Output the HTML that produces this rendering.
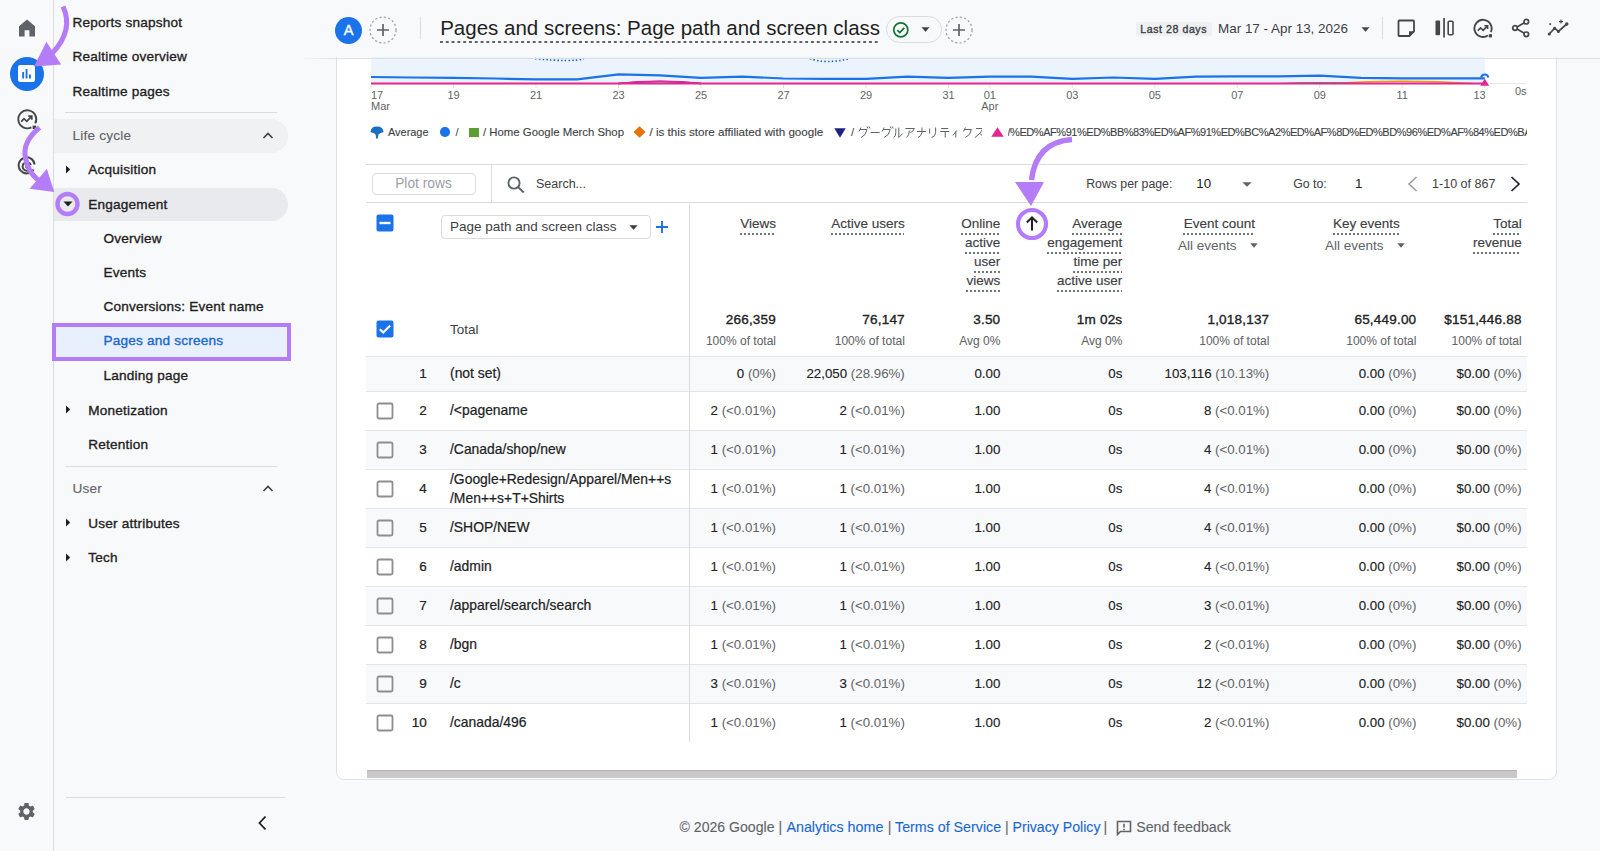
<!DOCTYPE html>
<html><head><meta charset="utf-8"><style>
html,body{margin:0;padding:0;}
body{width:1600px;height:851px;overflow:hidden;position:relative;background:#f8f9fa;font-family:"Liberation Sans",sans-serif;}
.a{position:absolute;}
.t{position:absolute;white-space:nowrap;}
</style></head><body>
<div class="a" style="left:53px;top:0px;width:1px;height:851px;background:#dadce0;"></div>
<svg class="a" style="left:17px;top:18px" width="20" height="20" viewBox="0 0 20 20"><path d="M10 1.5 L2 8.2 V18.5 H7.6 V12.3 H12.4 V18.5 H18 V8.2 Z" fill="#5f6368"/></svg>
<div class="a" style="left:9.5px;top:56.5px;width:34px;height:34px;background:#1a73e8;border-radius:50%;"></div>
<svg class="a" style="left:17px;top:64px" width="19" height="19" viewBox="0 0 19 19"><rect x="1" y="1" width="17" height="17" rx="2.2" fill="#fff"/><rect x="5.2" y="8" width="1.9" height="6.5" fill="#1a73e8"/><rect x="8.6" y="5" width="1.9" height="9.5" fill="#1a73e8"/><rect x="12" y="10.5" width="1.9" height="4" fill="#1a73e8"/></svg>
<svg class="a" style="left:15px;top:108px" width="24" height="24" viewBox="0 0 24 24"><path d="M20.3 15.4 A9 9 0 1 0 16.4 19.3" fill="none" stroke="#444746" stroke-width="1.9"/><path d="M6.2 13.6 L9 10.7 L11.8 13.3 L16.3 8.7" fill="none" stroke="#444746" stroke-width="1.8"/><path d="M13.2 8.2 H16.8 V11.8" fill="none" stroke="#444746" stroke-width="1.7"/><rect x="17.6" y="17.6" width="3.4" height="3.4" fill="#444746"/></svg>
<svg class="a" style="left:16px;top:156px" width="22" height="22" viewBox="0 0 22 22"><path d="M17.5 13.5 A8 8 0 1 1 18.6 8.5" fill="none" stroke="#444746" stroke-width="2"/><path d="M14.3 12.8 A4.2 4.2 0 1 1 14.8 9.2" fill="none" stroke="#444746" stroke-width="2"/><circle cx="10.5" cy="11" r="1.4" fill="#444746"/><path d="M11 11.5 L19 19.5" stroke="#444746" stroke-width="2.2"/></svg>
<svg class="a" style="left:16px;top:801px" width="21" height="21" viewBox="0 0 24 24"><path fill="#5f6368" d="M19.14 12.94c.04-.3.06-.61.06-.94 0-.32-.02-.64-.07-.94l2.03-1.58c.18-.14.23-.41.12-.61l-1.92-3.32c-.12-.22-.37-.29-.59-.22l-2.39.96c-.5-.38-1.03-.7-1.62-.94l-.36-2.54c-.04-.24-.24-.41-.48-.41h-3.84c-.24 0-.43.17-.47.41l-.36 2.54c-.59.24-1.13.57-1.62.94l-2.39-.96c-.22-.08-.47 0-.59.22L2.74 8.87c-.12.21-.08.47.12.61l2.03 1.58c-.05.3-.09.63-.09.94s.02.64.07.94l-2.03 1.58c-.18.14-.23.41-.12.61l1.92 3.32c.12.22.37.29.59.22l2.39-.96c.5.38 1.03.7 1.62.94l.36 2.54c.05.24.24.41.48.41h3.84c.24 0 .44-.17.47-.41l.36-2.54c.59-.24 1.13-.56 1.62-.94l2.39.96c.22.08.47 0 .59-.22l1.92-3.32c.12-.22.07-.47-.12-.61l-2.01-1.58zM12 15.6c-1.98 0-3.6-1.62-3.6-3.6s1.62-3.6 3.6-3.6 3.6 1.62 3.6 3.6-1.62 3.6-3.6 3.6z"/></svg>
<div class="t" style="top:15.89px;font-size:13.6px;line-height:13.6px;color:#1f1f1f;-webkit-text-stroke:0.35px #1f1f1f;letter-spacing:0.2px;left:72.5px;">Reports snapshot</div>
<div class="t" style="top:50.09px;font-size:13.6px;line-height:13.6px;color:#1f1f1f;-webkit-text-stroke:0.35px #1f1f1f;letter-spacing:0.2px;left:72.5px;">Realtime overview</div>
<div class="t" style="top:84.59px;font-size:13.6px;line-height:13.6px;color:#1f1f1f;-webkit-text-stroke:0.35px #1f1f1f;letter-spacing:0.2px;left:72.5px;">Realtime pages</div>
<div class="a" style="left:65px;top:112px;width:212px;height:1px;background:#dadce0;"></div>
<div class="a" style="left:54px;top:118.5px;width:234px;height:34px;background:#eff1f2;border-radius:0 17px 17px 0;"></div>
<div class="t" style="top:128.99px;font-size:13.6px;line-height:13.6px;color:#5f6368;-webkit-text-stroke:0.1px #5f6368;letter-spacing:0.2px;left:72.5px;">Life cycle</div>
<svg class="a" style="left:262px;top:131px" width="12" height="9" viewBox="0 0 12 9"><path d="M1.5 7 L6 2.5 L10.5 7" fill="none" stroke="#3c4043" stroke-width="1.6"/></svg>
<svg class="a" style="left:65px;top:165px" width="6" height="9" viewBox="0 0 6 9"><path d="M1 0.5 L5.2 4.5 L1 8.5 Z" fill="#1f1f1f"/></svg>
<div class="t" style="top:163.29px;font-size:13.6px;line-height:13.6px;color:#1f1f1f;-webkit-text-stroke:0.35px #1f1f1f;letter-spacing:0.2px;left:88.3px;">Acquisition</div>
<div class="a" style="left:54px;top:187.5px;width:234px;height:33.5px;background:#e8eaed;border-radius:0 17px 17px 0;"></div>
<svg class="a" style="left:62.5px;top:201px" width="10" height="6" viewBox="0 0 10 6"><path d="M0.5 0.5 L9.5 0.5 L5 5.5 Z" fill="#1f1f1f"/></svg>
<div class="t" style="top:197.69px;font-size:13.6px;line-height:13.6px;color:#1f1f1f;-webkit-text-stroke:0.35px #1f1f1f;letter-spacing:0.2px;left:88.3px;">Engagement</div>
<div class="t" style="top:231.89px;font-size:13.6px;line-height:13.6px;color:#1f1f1f;-webkit-text-stroke:0.35px #1f1f1f;letter-spacing:0.2px;left:103.5px;">Overview</div>
<div class="t" style="top:266.09px;font-size:13.6px;line-height:13.6px;color:#1f1f1f;-webkit-text-stroke:0.35px #1f1f1f;letter-spacing:0.2px;left:103.5px;">Events</div>
<div class="t" style="top:300.19px;font-size:13.6px;line-height:13.6px;color:#1f1f1f;-webkit-text-stroke:0.35px #1f1f1f;letter-spacing:0.2px;left:103.5px;">Conversions: Event name</div>
<div class="a" style="left:54px;top:325px;width:234px;height:33px;background:#e8f0fe;"></div>
<div class="a" style="left:51.5px;top:323px;width:239px;height:37.5px;box-sizing:border-box;border:4.5px solid #b57cf8;"></div>
<div class="t" style="top:334.29px;font-size:13.6px;line-height:13.6px;color:#1967d2;-webkit-text-stroke:0.35px #1967d2;letter-spacing:0.2px;left:103.5px;">Pages and screens</div>
<div class="t" style="top:369.19px;font-size:13.6px;line-height:13.6px;color:#1f1f1f;-webkit-text-stroke:0.35px #1f1f1f;letter-spacing:0.2px;left:103.5px;">Landing page</div>
<svg class="a" style="left:65px;top:405px" width="6" height="9" viewBox="0 0 6 9"><path d="M1 0.5 L5.2 4.5 L1 8.5 Z" fill="#1f1f1f"/></svg>
<div class="t" style="top:403.59px;font-size:13.6px;line-height:13.6px;color:#1f1f1f;-webkit-text-stroke:0.35px #1f1f1f;letter-spacing:0.2px;left:88.3px;">Monetization</div>
<div class="t" style="top:437.89px;font-size:13.6px;line-height:13.6px;color:#1f1f1f;-webkit-text-stroke:0.35px #1f1f1f;letter-spacing:0.2px;left:88.3px;">Retention</div>
<div class="a" style="left:65px;top:466px;width:212px;height:1px;background:#dadce0;"></div>
<div class="t" style="top:482.29px;font-size:13.6px;line-height:13.6px;color:#5f6368;-webkit-text-stroke:0.1px #5f6368;letter-spacing:0.2px;left:72.5px;">User</div>
<svg class="a" style="left:262px;top:484px" width="12" height="9" viewBox="0 0 12 9"><path d="M1.5 7 L6 2.5 L10.5 7" fill="none" stroke="#3c4043" stroke-width="1.6"/></svg>
<svg class="a" style="left:65px;top:518px" width="6" height="9" viewBox="0 0 6 9"><path d="M1 0.5 L5.2 4.5 L1 8.5 Z" fill="#1f1f1f"/></svg>
<div class="t" style="top:516.69px;font-size:13.6px;line-height:13.6px;color:#1f1f1f;-webkit-text-stroke:0.35px #1f1f1f;letter-spacing:0.2px;left:88.3px;">User attributes</div>
<svg class="a" style="left:65px;top:552.5px" width="6" height="9" viewBox="0 0 6 9"><path d="M1 0.5 L5.2 4.5 L1 8.5 Z" fill="#1f1f1f"/></svg>
<div class="t" style="top:550.79px;font-size:13.6px;line-height:13.6px;color:#1f1f1f;-webkit-text-stroke:0.35px #1f1f1f;letter-spacing:0.2px;left:88.3px;">Tech</div>
<div class="a" style="left:66px;top:796.5px;width:219px;height:1px;background:#dadce0;"></div>
<svg class="a" style="left:256px;top:815px" width="12" height="16" viewBox="0 0 12 16"><path d="M9.5 1.5 L3.5 8 L9.5 14.5" fill="none" stroke="#1f1f1f" stroke-width="1.8"/></svg>
<div class="a" style="left:335.5px;top:40px;width:1221px;height:740px;background:#fff;box-sizing:border-box;border:1px solid #e0e2e5;border-radius:8px;"></div>
<svg class="a" style="left:0;top:0" width="1600" height="120" viewBox="0 0 1600 120"><rect x="371.0" y="40" width="1113.8" height="43.5" fill="#ebf3fc"/><line x1="371.0" y1="83.6" x2="1526" y2="83.6" stroke="#e6e6e6" stroke-width="1"/><line x1="371.0" y1="84" x2="371.0" y2="88" stroke="#e0e0e0" stroke-width="1"/><line x1="453.5" y1="84" x2="453.5" y2="88" stroke="#e0e0e0" stroke-width="1"/><line x1="536.0" y1="84" x2="536.0" y2="88" stroke="#e0e0e0" stroke-width="1"/><line x1="618.5" y1="84" x2="618.5" y2="88" stroke="#e0e0e0" stroke-width="1"/><line x1="701.0" y1="84" x2="701.0" y2="88" stroke="#e0e0e0" stroke-width="1"/><line x1="783.5" y1="84" x2="783.5" y2="88" stroke="#e0e0e0" stroke-width="1"/><line x1="866.0" y1="84" x2="866.0" y2="88" stroke="#e0e0e0" stroke-width="1"/><line x1="948.5" y1="84" x2="948.5" y2="88" stroke="#e0e0e0" stroke-width="1"/><line x1="989.8" y1="84" x2="989.8" y2="88" stroke="#e0e0e0" stroke-width="1"/><line x1="1072.2" y1="84" x2="1072.2" y2="88" stroke="#e0e0e0" stroke-width="1"/><line x1="1154.8" y1="84" x2="1154.8" y2="88" stroke="#e0e0e0" stroke-width="1"/><line x1="1237.2" y1="84" x2="1237.2" y2="88" stroke="#e0e0e0" stroke-width="1"/><line x1="1319.8" y1="84" x2="1319.8" y2="88" stroke="#e0e0e0" stroke-width="1"/><line x1="1402.2" y1="84" x2="1402.2" y2="88" stroke="#e0e0e0" stroke-width="1"/><line x1="1484.8" y1="84" x2="1484.8" y2="88" stroke="#e0e0e0" stroke-width="1"/><path d="M535 58.6 Q572 62.5 584 58.6" fill="none" stroke="#1565c0" stroke-width="1.6" stroke-dasharray="1.5 2.2"/><path d="M810 58.5 Q826 64.5 850 58.5" fill="none" stroke="#1565c0" stroke-width="1.6" stroke-dasharray="1.5 2.2"/><path d="M1332.1 83.5 Q1402.2 79 1472.4 83.5" fill="none" stroke="#f29900" stroke-width="1.6"/><path d="M1278.5 83.5 Q1319.8 81.8 1361.0 83.5" fill="none" stroke="#34a853" stroke-width="1.2"/><path d="M618.5 83.5 Q659.8 79.5 701.0 83.5" fill="none" stroke="#1a237e" stroke-width="1.5"/><path d="M618.5 83.5 Q659.8 79 701.0 83.5" fill="none" stroke="#e52592" stroke-width="1.6"/><path d="M371.0 77.0 L412.2 77.5 L453.5 77.9 L494.8 78.5 L536.0 79.4 L577.2 79.4 L618.5 74.3 L659.8 75.3 L701.0 77.9 L742.2 76.6 L783.5 78.5 L824.8 78.8 L866.0 78.8 L907.2 76.6 L948.5 77.9 L989.8 76.6 L1031.0 76.6 L1072.2 78.8 L1113.5 77.5 L1154.8 78.8 L1196.0 76.6 L1237.2 76.3 L1278.5 76.3 L1319.8 75.6 L1361.0 77.8 L1402.2 78.4 L1443.5 78.4 L1484.8 78.4" fill="none" stroke="#1a73e8" stroke-width="2.2" stroke-linejoin="round"/><line x1="371.0" y1="83.4" x2="1484.8" y2="83.4" stroke="#e52592" stroke-width="2"/><path d="M1481.2 77.5 A3.6 3.6 0 0 1 1488.3 77.5" fill="none" stroke="#1a73e8" stroke-width="2.2"/><path d="M1480.2 85.8 L1484.8 78.8 L1489.2 85.8 Z" fill="#e52592"/></svg>
<div class="t" style="top:90.09px;font-size:11px;line-height:11px;color:#5f6368;left:371.0px;">17</div>
<div class="t" style="top:90.09px;font-size:11px;line-height:11px;color:#5f6368;left:453.5px;transform:translateX(-50%);">19</div>
<div class="t" style="top:90.09px;font-size:11px;line-height:11px;color:#5f6368;left:536.0px;transform:translateX(-50%);">21</div>
<div class="t" style="top:90.09px;font-size:11px;line-height:11px;color:#5f6368;left:618.5px;transform:translateX(-50%);">23</div>
<div class="t" style="top:90.09px;font-size:11px;line-height:11px;color:#5f6368;left:701.0px;transform:translateX(-50%);">25</div>
<div class="t" style="top:90.09px;font-size:11px;line-height:11px;color:#5f6368;left:783.5px;transform:translateX(-50%);">27</div>
<div class="t" style="top:90.09px;font-size:11px;line-height:11px;color:#5f6368;left:866.0px;transform:translateX(-50%);">29</div>
<div class="t" style="top:90.09px;font-size:11px;line-height:11px;color:#5f6368;left:948.5px;transform:translateX(-50%);">31</div>
<div class="t" style="top:90.09px;font-size:11px;line-height:11px;color:#5f6368;left:989.75px;transform:translateX(-50%);">01</div>
<div class="t" style="top:90.09px;font-size:11px;line-height:11px;color:#5f6368;left:1072.25px;transform:translateX(-50%);">03</div>
<div class="t" style="top:90.09px;font-size:11px;line-height:11px;color:#5f6368;left:1154.75px;transform:translateX(-50%);">05</div>
<div class="t" style="top:90.09px;font-size:11px;line-height:11px;color:#5f6368;left:1237.25px;transform:translateX(-50%);">07</div>
<div class="t" style="top:90.09px;font-size:11px;line-height:11px;color:#5f6368;left:1319.75px;transform:translateX(-50%);">09</div>
<div class="t" style="top:90.09px;font-size:11px;line-height:11px;color:#5f6368;left:1402.25px;transform:translateX(-50%);">11</div>
<div class="t" style="top:90.09px;font-size:11px;line-height:11px;color:#5f6368;right:114.25px;">13</div>
<div class="t" style="top:101.29px;font-size:11px;line-height:11px;color:#5f6368;left:371.0px;">Mar</div>
<div class="t" style="top:101.29px;font-size:11px;line-height:11px;color:#5f6368;left:989.75px;transform:translateX(-50%);">Apr</div>
<div class="t" style="top:85.99px;font-size:11px;line-height:11px;color:#5f6368;left:1515px;">0s</div>
<svg class="a" style="left:370px;top:126px" width="14" height="13" viewBox="0 0 14 13"><path d="M0.5 6.2 Q0.5 0.5 7 0.5 Q13.5 0.5 13.5 6.2 Q9.8 6.4 8.4 8.6 L7.9 12.4 L6.1 12.4 L5.6 8.6 Q4.2 6.4 0.5 6.2 Z" fill="#1a6fc4"/></svg>
<div class="t" style="top:126.93px;font-size:10.95px;line-height:10.95px;color:#3c4043;-webkit-text-stroke:0.1px #3c4043;left:388px;">Average</div>
<div class="a" style="left:440.3px;top:127.3px;width:9.4px;height:9.4px;background:#1a73e8;border-radius:50%;"></div>
<div class="t" style="top:126.63px;font-size:11.3px;line-height:11.3px;color:#3c4043;left:455.5px;">/</div>
<div class="a" style="left:469px;top:127.5px;width:9.8px;height:9.8px;background:#5c9e31;"></div>
<div class="t" style="top:126.57px;font-size:11.38px;line-height:11.38px;color:#3c4043;-webkit-text-stroke:0.1px #3c4043;left:483px;">/ Home Google Merch Shop</div>
<svg class="a" style="left:632.5px;top:126px" width="13" height="12" viewBox="0 0 13 12"><path d="M6.5 0.3 L12.5 6 L6.5 11.7 L0.5 6 Z" fill="#e8710a"/></svg>
<div class="t" style="top:126.34px;font-size:11.65px;line-height:11.65px;color:#3c4043;-webkit-text-stroke:0.1px #3c4043;left:649.5px;">/ is this store affiliated with google</div>
<svg class="a" style="left:834px;top:127.5px" width="12" height="10" viewBox="0 0 12 10"><path d="M0.3 0.3 L11.7 0.3 L6 9.7 Z" fill="#1a237e"/></svg>
<div class="t" style="top:126.63px;font-size:11.3px;line-height:11.3px;color:#3c4043;left:851px;">/</div>
<svg class="a" style="left:858px;top:126px" width="124" height="12" viewBox="0 0 124 12"><path transform="translate(0,0.5)" d="M3 1 L1 5 M2 3 H9 Q8 9 3 11 M9 0 L10 2 M11 0 L12 2" fill="none" stroke="#5f6368" stroke-width="1"/><path transform="translate(11.6,0.5)" d="M1 6 H10" fill="none" stroke="#5f6368" stroke-width="1"/><path transform="translate(23.2,0.5)" d="M3 1 L1 5 M2 3 H9 Q8 9 3 11 M9 0 L10 2 M11 0 L12 2" fill="none" stroke="#5f6368" stroke-width="1"/><path transform="translate(34.8,0.5)" d="M3 2 V6 Q3 10 1 11 M6 1 V11 L10 7" fill="none" stroke="#5f6368" stroke-width="1"/><path transform="translate(46.4,0.5)" d="M1 2 H10 Q9 5 6 6 M5 4 Q5 9 2 11" fill="none" stroke="#5f6368" stroke-width="1"/><path transform="translate(58.0,0.5)" d="M1 5 H10 M6 1 V6 Q5 10 2 11" fill="none" stroke="#5f6368" stroke-width="1"/><path transform="translate(69.6,0.5)" d="M2 2 V7 M8 1 V6 Q8 10 4 11" fill="none" stroke="#5f6368" stroke-width="1"/><path transform="translate(81.19999999999999,0.5)" d="M2 2 H9 M1 5 H10 M6 5 V11" fill="none" stroke="#5f6368" stroke-width="1"/><path transform="translate(92.79999999999998,0.5)" d="M6 4 L2 9 M5 5 V11" fill="none" stroke="#5f6368" stroke-width="1"/><path transform="translate(104.39999999999998,0.5)" d="M3 1 L1 5 M2 3 H9 Q8 9 3 11" fill="none" stroke="#5f6368" stroke-width="1"/><path transform="translate(115.99999999999997,0.5)" d="M2 2 H9 Q7 7 1 11 M6 7 L10 11" fill="none" stroke="#5f6368" stroke-width="1"/></svg>
<svg class="a" style="left:990.5px;top:127px" width="13" height="10" viewBox="0 0 13 10"><path d="M0.3 9.7 L12.7 9.7 L6.5 0.3 Z" fill="#e52592"/></svg>
<div class="t" style="left:1007.5px;top:126.63px;width:519px;overflow:hidden;font-size:11px;line-height:11.3px;letter-spacing:-0.45px;color:#3c4043;-webkit-text-stroke:0.1px #3c4043;">/%ED%AF%91%ED%BB%83%ED%AF%91%ED%BC%A2%ED%AF%8D%ED%BD%96%ED%AF%84%ED%BA%91%ED</div>
<div class="a" style="left:366px;top:164px;width:1161px;height:1px;background:#dadce0;"></div>
<div class="a" style="left:366px;top:202px;width:1161px;height:1px;background:#dadce0;"></div>
<div class="a" style="left:371.5px;top:173px;width:104px;height:22px;box-sizing:border-box;border:1px solid #dadce0;border-radius:4px;"></div>
<div class="t" style="top:177.02px;font-size:13.8px;line-height:13.8px;color:#9aa0a6;left:423.5px;transform:translateX(-50%);">Plot rows</div>
<div class="a" style="left:491px;top:164px;width:1px;height:38px;background:#dadce0;"></div>
<svg class="a" style="left:507px;top:176px" width="19" height="17" viewBox="0 0 19 17"><circle cx="7" cy="7" r="5.6" fill="none" stroke="#5f6368" stroke-width="1.9"/><path d="M11 11 L16.8 16.5" stroke="#5f6368" stroke-width="2"/></svg>
<div class="t" style="top:178.12px;font-size:12.5px;line-height:12.5px;color:#3c4043;left:536px;">Search...</div>
<div class="t" style="top:178.09px;font-size:12.3px;line-height:12.3px;color:#3c4043;left:1086.2px;">Rows per page:</div>
<div class="t" style="top:177.24px;font-size:13.3px;line-height:13.3px;color:#202124;left:1196.3px;">10</div>
<svg class="a" style="left:1241.5px;top:181.5px" width="10" height="5" viewBox="0 0 10 5"><path d="M0.3 0.3 L9.7 0.3 L5 4.8 Z" fill="#5f6368"/></svg>
<div class="t" style="top:178.09px;font-size:12.3px;line-height:12.3px;color:#3c4043;left:1293.3px;">Go to:</div>
<div class="t" style="top:177.24px;font-size:13.3px;line-height:13.3px;color:#202124;left:1355px;">1</div>
<svg class="a" style="left:1407px;top:176px" width="11" height="16" viewBox="0 0 11 16"><path d="M9.5 1 L2 8 L9.5 15" fill="none" stroke="#9aa0a6" stroke-width="1.6"/></svg>
<div class="t" style="top:177.88px;font-size:12.55px;line-height:12.55px;color:#3c4043;left:1432px;">1-10 of 867</div>
<svg class="a" style="left:1510px;top:176px" width="11" height="16" viewBox="0 0 11 16"><path d="M1.5 1 L9 8 L1.5 15" fill="none" stroke="#202124" stroke-width="1.7"/></svg>
<div class="a" style="left:689px;top:203px;width:1px;height:539px;background:#dadce0;"></div>
<svg class="a" style="left:376.2px;top:213.6px" width="18" height="18" viewBox="0 0 18 18"><rect x="0.5" y="0.5" width="17" height="17" rx="2" fill="#1a73e8"/><rect x="3.5" y="7.8" width="11" height="2.4" fill="#fff"/></svg>
<div class="a" style="left:441.3px;top:215px;width:209.5px;height:23.5px;box-sizing:border-box;border:1px solid #dadce0;border-radius:4px;"></div>
<div class="t" style="top:219.77px;font-size:13.5px;line-height:13.5px;color:#3c4043;left:450px;">Page path and screen class</div>
<svg class="a" style="left:629px;top:225px" width="9" height="5" viewBox="0 0 9 5"><path d="M0.3 0.3 L8.7 0.3 L4.5 4.7 Z" fill="#3c4043"/></svg>
<svg class="a" style="left:655px;top:219.5px" width="14" height="14" viewBox="0 0 14 14"><path d="M7 1 V13 M1 7 H13" stroke="#1a73e8" stroke-width="1.9"/></svg>
<div class="t" style="top:217.17px;font-size:13.5px;line-height:13.5px;color:#3c4043;-webkit-text-stroke:0.15px #3c4043;right:824px;text-decoration-line:underline;text-decoration-style:dotted;text-decoration-color:#70757a;text-decoration-thickness:1.5px;text-underline-offset:5px;">Views</div>
<div class="t" style="top:217.17px;font-size:13.5px;line-height:13.5px;color:#3c4043;-webkit-text-stroke:0.15px #3c4043;right:695.2px;text-decoration-line:underline;text-decoration-style:dotted;text-decoration-color:#70757a;text-decoration-thickness:1.5px;text-underline-offset:5px;">Active users</div>
<div class="t" style="top:217.17px;font-size:13.5px;line-height:13.5px;color:#3c4043;-webkit-text-stroke:0.15px #3c4043;right:599.7px;text-decoration-line:underline;text-decoration-style:dotted;text-decoration-color:#70757a;text-decoration-thickness:1.5px;text-underline-offset:5px;">Online</div>
<div class="t" style="top:236.17px;font-size:13.5px;line-height:13.5px;color:#3c4043;-webkit-text-stroke:0.15px #3c4043;right:599.7px;text-decoration-line:underline;text-decoration-style:dotted;text-decoration-color:#70757a;text-decoration-thickness:1.5px;text-underline-offset:5px;">active</div>
<div class="t" style="top:255.17px;font-size:13.5px;line-height:13.5px;color:#3c4043;-webkit-text-stroke:0.15px #3c4043;right:599.7px;text-decoration-line:underline;text-decoration-style:dotted;text-decoration-color:#70757a;text-decoration-thickness:1.5px;text-underline-offset:5px;">user</div>
<div class="t" style="top:274.17px;font-size:13.5px;line-height:13.5px;color:#3c4043;-webkit-text-stroke:0.15px #3c4043;right:599.7px;text-decoration-line:underline;text-decoration-style:dotted;text-decoration-color:#70757a;text-decoration-thickness:1.5px;text-underline-offset:5px;">views</div>
<div class="t" style="top:217.17px;font-size:13.5px;line-height:13.5px;color:#3c4043;-webkit-text-stroke:0.15px #3c4043;right:477.70000000000005px;text-decoration-line:underline;text-decoration-style:dotted;text-decoration-color:#70757a;text-decoration-thickness:1.5px;text-underline-offset:5px;">Average</div>
<div class="t" style="top:236.17px;font-size:13.5px;line-height:13.5px;color:#3c4043;-webkit-text-stroke:0.15px #3c4043;right:477.70000000000005px;text-decoration-line:underline;text-decoration-style:dotted;text-decoration-color:#70757a;text-decoration-thickness:1.5px;text-underline-offset:5px;">engagement</div>
<div class="t" style="top:255.17px;font-size:13.5px;line-height:13.5px;color:#3c4043;-webkit-text-stroke:0.15px #3c4043;right:477.70000000000005px;text-decoration-line:underline;text-decoration-style:dotted;text-decoration-color:#70757a;text-decoration-thickness:1.5px;text-underline-offset:5px;">time per</div>
<div class="t" style="top:274.17px;font-size:13.5px;line-height:13.5px;color:#3c4043;-webkit-text-stroke:0.15px #3c4043;right:477.70000000000005px;text-decoration-line:underline;text-decoration-style:dotted;text-decoration-color:#70757a;text-decoration-thickness:1.5px;text-underline-offset:5px;">active user</div>
<div class="t" style="top:217.17px;font-size:13.5px;line-height:13.5px;color:#3c4043;-webkit-text-stroke:0.15px #3c4043;right:345px;text-decoration-line:underline;text-decoration-style:dotted;text-decoration-color:#70757a;text-decoration-thickness:1.5px;text-underline-offset:5px;">Event count</div>
<div class="t" style="top:238.57px;font-size:13.5px;line-height:13.5px;color:#5f6368;left:1178px;">All events</div>
<svg class="a" style="left:1249.5px;top:243px" width="8" height="5" viewBox="0 0 8 5"><path d="M0.3 0.3 L7.7 0.3 L4 4.7 Z" fill="#5f6368"/></svg>
<div class="t" style="top:217.17px;font-size:13.5px;line-height:13.5px;color:#3c4043;-webkit-text-stroke:0.15px #3c4043;right:200.20000000000005px;text-decoration-line:underline;text-decoration-style:dotted;text-decoration-color:#70757a;text-decoration-thickness:1.5px;text-underline-offset:5px;">Key events</div>
<div class="t" style="top:238.57px;font-size:13.5px;line-height:13.5px;color:#5f6368;left:1325px;">All events</div>
<svg class="a" style="left:1396.5px;top:243px" width="8" height="5" viewBox="0 0 8 5"><path d="M0.3 0.3 L7.7 0.3 L4 4.7 Z" fill="#5f6368"/></svg>
<div class="t" style="top:217.17px;font-size:13.5px;line-height:13.5px;color:#3c4043;-webkit-text-stroke:0.15px #3c4043;right:78.20000000000005px;text-decoration-line:underline;text-decoration-style:dotted;text-decoration-color:#70757a;text-decoration-thickness:1.5px;text-underline-offset:5px;">Total</div>
<div class="t" style="top:236.17px;font-size:13.5px;line-height:13.5px;color:#3c4043;-webkit-text-stroke:0.15px #3c4043;right:78.20000000000005px;text-decoration-line:underline;text-decoration-style:dotted;text-decoration-color:#70757a;text-decoration-thickness:1.5px;text-underline-offset:5px;">revenue</div>
<svg class="a" style="left:1015px;top:206.5px" width="34" height="34" viewBox="0 0 34 34"><circle cx="17" cy="17" r="14" fill="#fff" stroke="#b57cf8" stroke-width="4.2"/><path d="M17 23.5 V10.5 M11.8 15.5 L17 10.3 L22.2 15.5" fill="none" stroke="#202124" stroke-width="2"/></svg>
<svg class="a" style="left:376.2px;top:320.3px" width="18" height="18" viewBox="0 0 18 18"><rect x="0.5" y="0.5" width="17" height="17" rx="2" fill="#1a73e8"/><path d="M3.8 9.2 L7.2 12.5 L14.2 5.5" fill="none" stroke="#fff" stroke-width="2.2"/></svg>
<div class="t" style="top:323.07px;font-size:13.5px;line-height:13.5px;color:#3c4043;left:450px;">Total</div>
<div class="t" style="top:312.57px;font-size:13.5px;line-height:13.5px;color:#202124;-webkit-text-stroke:0.35px #202124;letter-spacing:0.2px;right:824px;">266,359</div>
<div class="t" style="top:334.84px;font-size:12px;line-height:12px;color:#5f6368;-webkit-text-stroke:0.05px #5f6368;right:824px;">100% of total</div>
<div class="t" style="top:312.57px;font-size:13.5px;line-height:13.5px;color:#202124;-webkit-text-stroke:0.35px #202124;letter-spacing:0.2px;right:695.2px;">76,147</div>
<div class="t" style="top:334.84px;font-size:12px;line-height:12px;color:#5f6368;-webkit-text-stroke:0.05px #5f6368;right:695.2px;">100% of total</div>
<div class="t" style="top:312.57px;font-size:13.5px;line-height:13.5px;color:#202124;-webkit-text-stroke:0.35px #202124;letter-spacing:0.2px;right:599.7px;">3.50</div>
<div class="t" style="top:334.84px;font-size:12px;line-height:12px;color:#5f6368;-webkit-text-stroke:0.05px #5f6368;right:599.7px;">Avg 0%</div>
<div class="t" style="top:312.57px;font-size:13.5px;line-height:13.5px;color:#202124;-webkit-text-stroke:0.35px #202124;letter-spacing:0.2px;right:477.70000000000005px;">1m 02s</div>
<div class="t" style="top:334.84px;font-size:12px;line-height:12px;color:#5f6368;-webkit-text-stroke:0.05px #5f6368;right:477.70000000000005px;">Avg 0%</div>
<div class="t" style="top:312.57px;font-size:13.5px;line-height:13.5px;color:#202124;-webkit-text-stroke:0.35px #202124;letter-spacing:0.2px;right:330.70000000000005px;">1,018,137</div>
<div class="t" style="top:334.84px;font-size:12px;line-height:12px;color:#5f6368;-webkit-text-stroke:0.05px #5f6368;right:330.70000000000005px;">100% of total</div>
<div class="t" style="top:312.57px;font-size:13.5px;line-height:13.5px;color:#202124;-webkit-text-stroke:0.35px #202124;letter-spacing:0.2px;right:183.70000000000005px;">65,449.00</div>
<div class="t" style="top:334.84px;font-size:12px;line-height:12px;color:#5f6368;-webkit-text-stroke:0.05px #5f6368;right:183.70000000000005px;">100% of total</div>
<div class="t" style="top:312.57px;font-size:13.5px;line-height:13.5px;color:#202124;-webkit-text-stroke:0.35px #202124;letter-spacing:0.2px;right:78.40000000000009px;">$151,446.88</div>
<div class="t" style="top:334.84px;font-size:12px;line-height:12px;color:#5f6368;-webkit-text-stroke:0.05px #5f6368;right:78.40000000000009px;">100% of total</div>
<div class="a" style="left:366px;top:355.5px;width:1161px;height:1px;background:#e2e4e7;"></div>
<div class="a" style="left:366px;top:356.5px;width:1161px;height:34.5px;background:#f8f9fa;"></div>
<div class="a" style="left:366px;top:391px;width:1161px;height:1px;background:#e2e4e7;"></div>
<div class="t" style="top:366.62px;font-size:13.5px;line-height:13.5px;color:#202124;-webkit-text-stroke:0.2px #202124;right:1173.2px;">1</div>
<div class="t" style="top:367.08px;font-size:13.9px;line-height:13.9px;color:#202124;-webkit-text-stroke:0.2px #202124;left:450px;">(not set)</div>
<div class="t" style="top:366.79px;font-size:13.3px;line-height:13.3px;color:#202124;-webkit-text-stroke:0.12px #202124;right:824px;">0 <span style="color:#5f6368;-webkit-text-stroke:0">(0%)</span></div>
<div class="t" style="top:366.79px;font-size:13.3px;line-height:13.3px;color:#202124;-webkit-text-stroke:0.12px #202124;right:695.2px;">22,050 <span style="color:#5f6368;-webkit-text-stroke:0">(28.96%)</span></div>
<div class="t" style="top:366.79px;font-size:13.3px;line-height:13.3px;color:#202124;-webkit-text-stroke:0.12px #202124;right:599.7px;">0.00</div>
<div class="t" style="top:366.79px;font-size:13.3px;line-height:13.3px;color:#202124;-webkit-text-stroke:0.12px #202124;right:477.70000000000005px;">0s</div>
<div class="t" style="top:366.79px;font-size:13.3px;line-height:13.3px;color:#202124;-webkit-text-stroke:0.12px #202124;right:330.70000000000005px;">103,116 <span style="color:#5f6368;-webkit-text-stroke:0">(10.13%)</span></div>
<div class="t" style="top:366.79px;font-size:13.3px;line-height:13.3px;color:#202124;-webkit-text-stroke:0.12px #202124;right:183.70000000000005px;">0.00 <span style="color:#5f6368;-webkit-text-stroke:0">(0%)</span></div>
<div class="t" style="top:366.79px;font-size:13.3px;line-height:13.3px;color:#202124;-webkit-text-stroke:0.12px #202124;right:78.40000000000009px;">$0.00 <span style="color:#5f6368;-webkit-text-stroke:0">(0%)</span></div>
<div class="a" style="left:366px;top:430px;width:1161px;height:1px;background:#e2e4e7;"></div>
<svg class="a" style="left:376.2px;top:402.0px" width="18" height="18" viewBox="0 0 18 18"><rect x="1.5" y="1.5" width="15" height="15" rx="1.5" fill="none" stroke="#8e8e8e" stroke-width="1.8"/></svg>
<div class="t" style="top:403.87px;font-size:13.5px;line-height:13.5px;color:#202124;-webkit-text-stroke:0.2px #202124;right:1173.2px;">2</div>
<div class="t" style="top:404.33px;font-size:13.9px;line-height:13.9px;color:#202124;-webkit-text-stroke:0.2px #202124;left:450px;">/&lt;pagename</div>
<div class="t" style="top:404.04px;font-size:13.3px;line-height:13.3px;color:#202124;-webkit-text-stroke:0.12px #202124;right:824px;">2 <span style="color:#5f6368;-webkit-text-stroke:0">(&lt;0.01%)</span></div>
<div class="t" style="top:404.04px;font-size:13.3px;line-height:13.3px;color:#202124;-webkit-text-stroke:0.12px #202124;right:695.2px;">2 <span style="color:#5f6368;-webkit-text-stroke:0">(&lt;0.01%)</span></div>
<div class="t" style="top:404.04px;font-size:13.3px;line-height:13.3px;color:#202124;-webkit-text-stroke:0.12px #202124;right:599.7px;">1.00</div>
<div class="t" style="top:404.04px;font-size:13.3px;line-height:13.3px;color:#202124;-webkit-text-stroke:0.12px #202124;right:477.70000000000005px;">0s</div>
<div class="t" style="top:404.04px;font-size:13.3px;line-height:13.3px;color:#202124;-webkit-text-stroke:0.12px #202124;right:330.70000000000005px;">8 <span style="color:#5f6368;-webkit-text-stroke:0">(&lt;0.01%)</span></div>
<div class="t" style="top:404.04px;font-size:13.3px;line-height:13.3px;color:#202124;-webkit-text-stroke:0.12px #202124;right:183.70000000000005px;">0.00 <span style="color:#5f6368;-webkit-text-stroke:0">(0%)</span></div>
<div class="t" style="top:404.04px;font-size:13.3px;line-height:13.3px;color:#202124;-webkit-text-stroke:0.12px #202124;right:78.40000000000009px;">$0.00 <span style="color:#5f6368;-webkit-text-stroke:0">(0%)</span></div>
<div class="a" style="left:366px;top:431px;width:1161px;height:38px;background:#f8f9fa;"></div>
<div class="a" style="left:366px;top:469px;width:1161px;height:1px;background:#e2e4e7;"></div>
<svg class="a" style="left:376.2px;top:441.0px" width="18" height="18" viewBox="0 0 18 18"><rect x="1.5" y="1.5" width="15" height="15" rx="1.5" fill="none" stroke="#8e8e8e" stroke-width="1.8"/></svg>
<div class="t" style="top:442.87px;font-size:13.5px;line-height:13.5px;color:#202124;-webkit-text-stroke:0.2px #202124;right:1173.2px;">3</div>
<div class="t" style="top:443.33px;font-size:13.9px;line-height:13.9px;color:#202124;-webkit-text-stroke:0.2px #202124;left:450px;">/Canada/shop/new</div>
<div class="t" style="top:443.04px;font-size:13.3px;line-height:13.3px;color:#202124;-webkit-text-stroke:0.12px #202124;right:824px;">1 <span style="color:#5f6368;-webkit-text-stroke:0">(&lt;0.01%)</span></div>
<div class="t" style="top:443.04px;font-size:13.3px;line-height:13.3px;color:#202124;-webkit-text-stroke:0.12px #202124;right:695.2px;">1 <span style="color:#5f6368;-webkit-text-stroke:0">(&lt;0.01%)</span></div>
<div class="t" style="top:443.04px;font-size:13.3px;line-height:13.3px;color:#202124;-webkit-text-stroke:0.12px #202124;right:599.7px;">1.00</div>
<div class="t" style="top:443.04px;font-size:13.3px;line-height:13.3px;color:#202124;-webkit-text-stroke:0.12px #202124;right:477.70000000000005px;">0s</div>
<div class="t" style="top:443.04px;font-size:13.3px;line-height:13.3px;color:#202124;-webkit-text-stroke:0.12px #202124;right:330.70000000000005px;">4 <span style="color:#5f6368;-webkit-text-stroke:0">(&lt;0.01%)</span></div>
<div class="t" style="top:443.04px;font-size:13.3px;line-height:13.3px;color:#202124;-webkit-text-stroke:0.12px #202124;right:183.70000000000005px;">0.00 <span style="color:#5f6368;-webkit-text-stroke:0">(0%)</span></div>
<div class="t" style="top:443.04px;font-size:13.3px;line-height:13.3px;color:#202124;-webkit-text-stroke:0.12px #202124;right:78.40000000000009px;">$0.00 <span style="color:#5f6368;-webkit-text-stroke:0">(0%)</span></div>
<div class="a" style="left:366px;top:508px;width:1161px;height:1px;background:#e2e4e7;"></div>
<svg class="a" style="left:376.2px;top:480.0px" width="18" height="18" viewBox="0 0 18 18"><rect x="1.5" y="1.5" width="15" height="15" rx="1.5" fill="none" stroke="#8e8e8e" stroke-width="1.8"/></svg>
<div class="t" style="top:481.87px;font-size:13.5px;line-height:13.5px;color:#202124;-webkit-text-stroke:0.2px #202124;right:1173.2px;">4</div>
<div class="t" style="top:472.83px;font-size:13.9px;line-height:13.9px;color:#202124;-webkit-text-stroke:0.2px #202124;left:450px;">/Google+Redesign/Apparel/Men++s</div>
<div class="t" style="top:491.83px;font-size:13.9px;line-height:13.9px;color:#202124;-webkit-text-stroke:0.2px #202124;left:450px;">/Men++s+T+Shirts</div>
<div class="t" style="top:482.04px;font-size:13.3px;line-height:13.3px;color:#202124;-webkit-text-stroke:0.12px #202124;right:824px;">1 <span style="color:#5f6368;-webkit-text-stroke:0">(&lt;0.01%)</span></div>
<div class="t" style="top:482.04px;font-size:13.3px;line-height:13.3px;color:#202124;-webkit-text-stroke:0.12px #202124;right:695.2px;">1 <span style="color:#5f6368;-webkit-text-stroke:0">(&lt;0.01%)</span></div>
<div class="t" style="top:482.04px;font-size:13.3px;line-height:13.3px;color:#202124;-webkit-text-stroke:0.12px #202124;right:599.7px;">1.00</div>
<div class="t" style="top:482.04px;font-size:13.3px;line-height:13.3px;color:#202124;-webkit-text-stroke:0.12px #202124;right:477.70000000000005px;">0s</div>
<div class="t" style="top:482.04px;font-size:13.3px;line-height:13.3px;color:#202124;-webkit-text-stroke:0.12px #202124;right:330.70000000000005px;">4 <span style="color:#5f6368;-webkit-text-stroke:0">(&lt;0.01%)</span></div>
<div class="t" style="top:482.04px;font-size:13.3px;line-height:13.3px;color:#202124;-webkit-text-stroke:0.12px #202124;right:183.70000000000005px;">0.00 <span style="color:#5f6368;-webkit-text-stroke:0">(0%)</span></div>
<div class="t" style="top:482.04px;font-size:13.3px;line-height:13.3px;color:#202124;-webkit-text-stroke:0.12px #202124;right:78.40000000000009px;">$0.00 <span style="color:#5f6368;-webkit-text-stroke:0">(0%)</span></div>
<div class="a" style="left:366px;top:509px;width:1161px;height:38px;background:#f8f9fa;"></div>
<div class="a" style="left:366px;top:547px;width:1161px;height:1px;background:#e2e4e7;"></div>
<svg class="a" style="left:376.2px;top:519.0px" width="18" height="18" viewBox="0 0 18 18"><rect x="1.5" y="1.5" width="15" height="15" rx="1.5" fill="none" stroke="#8e8e8e" stroke-width="1.8"/></svg>
<div class="t" style="top:520.87px;font-size:13.5px;line-height:13.5px;color:#202124;-webkit-text-stroke:0.2px #202124;right:1173.2px;">5</div>
<div class="t" style="top:521.33px;font-size:13.9px;line-height:13.9px;color:#202124;-webkit-text-stroke:0.2px #202124;left:450px;">/SHOP/NEW</div>
<div class="t" style="top:521.04px;font-size:13.3px;line-height:13.3px;color:#202124;-webkit-text-stroke:0.12px #202124;right:824px;">1 <span style="color:#5f6368;-webkit-text-stroke:0">(&lt;0.01%)</span></div>
<div class="t" style="top:521.04px;font-size:13.3px;line-height:13.3px;color:#202124;-webkit-text-stroke:0.12px #202124;right:695.2px;">1 <span style="color:#5f6368;-webkit-text-stroke:0">(&lt;0.01%)</span></div>
<div class="t" style="top:521.04px;font-size:13.3px;line-height:13.3px;color:#202124;-webkit-text-stroke:0.12px #202124;right:599.7px;">1.00</div>
<div class="t" style="top:521.04px;font-size:13.3px;line-height:13.3px;color:#202124;-webkit-text-stroke:0.12px #202124;right:477.70000000000005px;">0s</div>
<div class="t" style="top:521.04px;font-size:13.3px;line-height:13.3px;color:#202124;-webkit-text-stroke:0.12px #202124;right:330.70000000000005px;">4 <span style="color:#5f6368;-webkit-text-stroke:0">(&lt;0.01%)</span></div>
<div class="t" style="top:521.04px;font-size:13.3px;line-height:13.3px;color:#202124;-webkit-text-stroke:0.12px #202124;right:183.70000000000005px;">0.00 <span style="color:#5f6368;-webkit-text-stroke:0">(0%)</span></div>
<div class="t" style="top:521.04px;font-size:13.3px;line-height:13.3px;color:#202124;-webkit-text-stroke:0.12px #202124;right:78.40000000000009px;">$0.00 <span style="color:#5f6368;-webkit-text-stroke:0">(0%)</span></div>
<div class="a" style="left:366px;top:586px;width:1161px;height:1px;background:#e2e4e7;"></div>
<svg class="a" style="left:376.2px;top:558.0px" width="18" height="18" viewBox="0 0 18 18"><rect x="1.5" y="1.5" width="15" height="15" rx="1.5" fill="none" stroke="#8e8e8e" stroke-width="1.8"/></svg>
<div class="t" style="top:559.87px;font-size:13.5px;line-height:13.5px;color:#202124;-webkit-text-stroke:0.2px #202124;right:1173.2px;">6</div>
<div class="t" style="top:560.33px;font-size:13.9px;line-height:13.9px;color:#202124;-webkit-text-stroke:0.2px #202124;left:450px;">/admin</div>
<div class="t" style="top:560.04px;font-size:13.3px;line-height:13.3px;color:#202124;-webkit-text-stroke:0.12px #202124;right:824px;">1 <span style="color:#5f6368;-webkit-text-stroke:0">(&lt;0.01%)</span></div>
<div class="t" style="top:560.04px;font-size:13.3px;line-height:13.3px;color:#202124;-webkit-text-stroke:0.12px #202124;right:695.2px;">1 <span style="color:#5f6368;-webkit-text-stroke:0">(&lt;0.01%)</span></div>
<div class="t" style="top:560.04px;font-size:13.3px;line-height:13.3px;color:#202124;-webkit-text-stroke:0.12px #202124;right:599.7px;">1.00</div>
<div class="t" style="top:560.04px;font-size:13.3px;line-height:13.3px;color:#202124;-webkit-text-stroke:0.12px #202124;right:477.70000000000005px;">0s</div>
<div class="t" style="top:560.04px;font-size:13.3px;line-height:13.3px;color:#202124;-webkit-text-stroke:0.12px #202124;right:330.70000000000005px;">4 <span style="color:#5f6368;-webkit-text-stroke:0">(&lt;0.01%)</span></div>
<div class="t" style="top:560.04px;font-size:13.3px;line-height:13.3px;color:#202124;-webkit-text-stroke:0.12px #202124;right:183.70000000000005px;">0.00 <span style="color:#5f6368;-webkit-text-stroke:0">(0%)</span></div>
<div class="t" style="top:560.04px;font-size:13.3px;line-height:13.3px;color:#202124;-webkit-text-stroke:0.12px #202124;right:78.40000000000009px;">$0.00 <span style="color:#5f6368;-webkit-text-stroke:0">(0%)</span></div>
<div class="a" style="left:366px;top:587px;width:1161px;height:38px;background:#f8f9fa;"></div>
<div class="a" style="left:366px;top:625px;width:1161px;height:1px;background:#e2e4e7;"></div>
<svg class="a" style="left:376.2px;top:597.0px" width="18" height="18" viewBox="0 0 18 18"><rect x="1.5" y="1.5" width="15" height="15" rx="1.5" fill="none" stroke="#8e8e8e" stroke-width="1.8"/></svg>
<div class="t" style="top:598.87px;font-size:13.5px;line-height:13.5px;color:#202124;-webkit-text-stroke:0.2px #202124;right:1173.2px;">7</div>
<div class="t" style="top:599.33px;font-size:13.9px;line-height:13.9px;color:#202124;-webkit-text-stroke:0.2px #202124;left:450px;">/apparel/search/search</div>
<div class="t" style="top:599.04px;font-size:13.3px;line-height:13.3px;color:#202124;-webkit-text-stroke:0.12px #202124;right:824px;">1 <span style="color:#5f6368;-webkit-text-stroke:0">(&lt;0.01%)</span></div>
<div class="t" style="top:599.04px;font-size:13.3px;line-height:13.3px;color:#202124;-webkit-text-stroke:0.12px #202124;right:695.2px;">1 <span style="color:#5f6368;-webkit-text-stroke:0">(&lt;0.01%)</span></div>
<div class="t" style="top:599.04px;font-size:13.3px;line-height:13.3px;color:#202124;-webkit-text-stroke:0.12px #202124;right:599.7px;">1.00</div>
<div class="t" style="top:599.04px;font-size:13.3px;line-height:13.3px;color:#202124;-webkit-text-stroke:0.12px #202124;right:477.70000000000005px;">0s</div>
<div class="t" style="top:599.04px;font-size:13.3px;line-height:13.3px;color:#202124;-webkit-text-stroke:0.12px #202124;right:330.70000000000005px;">3 <span style="color:#5f6368;-webkit-text-stroke:0">(&lt;0.01%)</span></div>
<div class="t" style="top:599.04px;font-size:13.3px;line-height:13.3px;color:#202124;-webkit-text-stroke:0.12px #202124;right:183.70000000000005px;">0.00 <span style="color:#5f6368;-webkit-text-stroke:0">(0%)</span></div>
<div class="t" style="top:599.04px;font-size:13.3px;line-height:13.3px;color:#202124;-webkit-text-stroke:0.12px #202124;right:78.40000000000009px;">$0.00 <span style="color:#5f6368;-webkit-text-stroke:0">(0%)</span></div>
<div class="a" style="left:366px;top:664px;width:1161px;height:1px;background:#e2e4e7;"></div>
<svg class="a" style="left:376.2px;top:636.0px" width="18" height="18" viewBox="0 0 18 18"><rect x="1.5" y="1.5" width="15" height="15" rx="1.5" fill="none" stroke="#8e8e8e" stroke-width="1.8"/></svg>
<div class="t" style="top:637.87px;font-size:13.5px;line-height:13.5px;color:#202124;-webkit-text-stroke:0.2px #202124;right:1173.2px;">8</div>
<div class="t" style="top:638.33px;font-size:13.9px;line-height:13.9px;color:#202124;-webkit-text-stroke:0.2px #202124;left:450px;">/bgn</div>
<div class="t" style="top:638.04px;font-size:13.3px;line-height:13.3px;color:#202124;-webkit-text-stroke:0.12px #202124;right:824px;">1 <span style="color:#5f6368;-webkit-text-stroke:0">(&lt;0.01%)</span></div>
<div class="t" style="top:638.04px;font-size:13.3px;line-height:13.3px;color:#202124;-webkit-text-stroke:0.12px #202124;right:695.2px;">1 <span style="color:#5f6368;-webkit-text-stroke:0">(&lt;0.01%)</span></div>
<div class="t" style="top:638.04px;font-size:13.3px;line-height:13.3px;color:#202124;-webkit-text-stroke:0.12px #202124;right:599.7px;">1.00</div>
<div class="t" style="top:638.04px;font-size:13.3px;line-height:13.3px;color:#202124;-webkit-text-stroke:0.12px #202124;right:477.70000000000005px;">0s</div>
<div class="t" style="top:638.04px;font-size:13.3px;line-height:13.3px;color:#202124;-webkit-text-stroke:0.12px #202124;right:330.70000000000005px;">2 <span style="color:#5f6368;-webkit-text-stroke:0">(&lt;0.01%)</span></div>
<div class="t" style="top:638.04px;font-size:13.3px;line-height:13.3px;color:#202124;-webkit-text-stroke:0.12px #202124;right:183.70000000000005px;">0.00 <span style="color:#5f6368;-webkit-text-stroke:0">(0%)</span></div>
<div class="t" style="top:638.04px;font-size:13.3px;line-height:13.3px;color:#202124;-webkit-text-stroke:0.12px #202124;right:78.40000000000009px;">$0.00 <span style="color:#5f6368;-webkit-text-stroke:0">(0%)</span></div>
<div class="a" style="left:366px;top:665px;width:1161px;height:38px;background:#f8f9fa;"></div>
<div class="a" style="left:366px;top:703px;width:1161px;height:1px;background:#e2e4e7;"></div>
<svg class="a" style="left:376.2px;top:675.0px" width="18" height="18" viewBox="0 0 18 18"><rect x="1.5" y="1.5" width="15" height="15" rx="1.5" fill="none" stroke="#8e8e8e" stroke-width="1.8"/></svg>
<div class="t" style="top:676.87px;font-size:13.5px;line-height:13.5px;color:#202124;-webkit-text-stroke:0.2px #202124;right:1173.2px;">9</div>
<div class="t" style="top:677.33px;font-size:13.9px;line-height:13.9px;color:#202124;-webkit-text-stroke:0.2px #202124;left:450px;">/c</div>
<div class="t" style="top:677.04px;font-size:13.3px;line-height:13.3px;color:#202124;-webkit-text-stroke:0.12px #202124;right:824px;">3 <span style="color:#5f6368;-webkit-text-stroke:0">(&lt;0.01%)</span></div>
<div class="t" style="top:677.04px;font-size:13.3px;line-height:13.3px;color:#202124;-webkit-text-stroke:0.12px #202124;right:695.2px;">3 <span style="color:#5f6368;-webkit-text-stroke:0">(&lt;0.01%)</span></div>
<div class="t" style="top:677.04px;font-size:13.3px;line-height:13.3px;color:#202124;-webkit-text-stroke:0.12px #202124;right:599.7px;">1.00</div>
<div class="t" style="top:677.04px;font-size:13.3px;line-height:13.3px;color:#202124;-webkit-text-stroke:0.12px #202124;right:477.70000000000005px;">0s</div>
<div class="t" style="top:677.04px;font-size:13.3px;line-height:13.3px;color:#202124;-webkit-text-stroke:0.12px #202124;right:330.70000000000005px;">12 <span style="color:#5f6368;-webkit-text-stroke:0">(&lt;0.01%)</span></div>
<div class="t" style="top:677.04px;font-size:13.3px;line-height:13.3px;color:#202124;-webkit-text-stroke:0.12px #202124;right:183.70000000000005px;">0.00 <span style="color:#5f6368;-webkit-text-stroke:0">(0%)</span></div>
<div class="t" style="top:677.04px;font-size:13.3px;line-height:13.3px;color:#202124;-webkit-text-stroke:0.12px #202124;right:78.40000000000009px;">$0.00 <span style="color:#5f6368;-webkit-text-stroke:0">(0%)</span></div>
<svg class="a" style="left:376.2px;top:714.0px" width="18" height="18" viewBox="0 0 18 18"><rect x="1.5" y="1.5" width="15" height="15" rx="1.5" fill="none" stroke="#8e8e8e" stroke-width="1.8"/></svg>
<div class="t" style="top:715.87px;font-size:13.5px;line-height:13.5px;color:#202124;-webkit-text-stroke:0.2px #202124;right:1173.2px;">10</div>
<div class="t" style="top:716.33px;font-size:13.9px;line-height:13.9px;color:#202124;-webkit-text-stroke:0.2px #202124;left:450px;">/canada/496</div>
<div class="t" style="top:716.04px;font-size:13.3px;line-height:13.3px;color:#202124;-webkit-text-stroke:0.12px #202124;right:824px;">1 <span style="color:#5f6368;-webkit-text-stroke:0">(&lt;0.01%)</span></div>
<div class="t" style="top:716.04px;font-size:13.3px;line-height:13.3px;color:#202124;-webkit-text-stroke:0.12px #202124;right:695.2px;">1 <span style="color:#5f6368;-webkit-text-stroke:0">(&lt;0.01%)</span></div>
<div class="t" style="top:716.04px;font-size:13.3px;line-height:13.3px;color:#202124;-webkit-text-stroke:0.12px #202124;right:599.7px;">1.00</div>
<div class="t" style="top:716.04px;font-size:13.3px;line-height:13.3px;color:#202124;-webkit-text-stroke:0.12px #202124;right:477.70000000000005px;">0s</div>
<div class="t" style="top:716.04px;font-size:13.3px;line-height:13.3px;color:#202124;-webkit-text-stroke:0.12px #202124;right:330.70000000000005px;">2 <span style="color:#5f6368;-webkit-text-stroke:0">(&lt;0.01%)</span></div>
<div class="t" style="top:716.04px;font-size:13.3px;line-height:13.3px;color:#202124;-webkit-text-stroke:0.12px #202124;right:183.70000000000005px;">0.00 <span style="color:#5f6368;-webkit-text-stroke:0">(0%)</span></div>
<div class="t" style="top:716.04px;font-size:13.3px;line-height:13.3px;color:#202124;-webkit-text-stroke:0.12px #202124;right:78.40000000000009px;">$0.00 <span style="color:#5f6368;-webkit-text-stroke:0">(0%)</span></div>
<div class="a" style="left:689px;top:203px;width:1px;height:539px;background:#dadce0;"></div>
<div class="a" style="left:366.5px;top:769.5px;width:1150px;height:8.5px;background:#c9c9c9;box-sizing:border-box;border-top:1px solid #b3b3b3;"></div>
<div class="t" style="top:819.96px;font-size:14.1px;line-height:14.1px;color:#5f6368;-webkit-text-stroke:0.1px #5f6368;left:679.5px;">&copy; 2026 Google |</div>
<div class="t" style="top:819.80px;font-size:14.3px;line-height:14.3px;color:#1967d2;-webkit-text-stroke:0.1px #1967d2;left:786.4px;">Analytics home</div>
<div class="t" style="top:819.96px;font-size:14.1px;line-height:14.1px;color:#5f6368;-webkit-text-stroke:0.1px #5f6368;left:887.8px;">|</div>
<div class="t" style="top:819.84px;font-size:14.25px;line-height:14.25px;color:#1967d2;-webkit-text-stroke:0.1px #1967d2;left:895px;">Terms of Service</div>
<div class="t" style="top:819.96px;font-size:14.1px;line-height:14.1px;color:#5f6368;-webkit-text-stroke:0.1px #5f6368;left:1005px;">|</div>
<div class="t" style="top:819.92px;font-size:14.15px;line-height:14.15px;color:#1967d2;-webkit-text-stroke:0.1px #1967d2;left:1012.5px;">Privacy Policy</div>
<div class="t" style="top:819.96px;font-size:14.1px;line-height:14.1px;color:#5f6368;-webkit-text-stroke:0.1px #5f6368;left:1103.5px;">|</div>
<svg class="a" style="left:1116px;top:819.5px" width="16" height="16" viewBox="0 0 16 16"><path d="M1.5 1.5 H14.5 V11.5 H4.5 L1.5 14.5 Z" fill="none" stroke="#5f6368" stroke-width="1.6"/><path d="M8 3.8 V7.6 M8 8.8 V10.2" stroke="#5f6368" stroke-width="1.6"/></svg>
<div class="t" style="top:819.88px;font-size:14.2px;line-height:14.2px;color:#5f6368;-webkit-text-stroke:0.1px #5f6368;left:1136.2px;">Send feedback</div>
<div class="a" style="left:300px;top:0px;width:1300px;height:57px;background:#f8f9fa;z-index:0;"></div>
<div class="a" style="left:300px;top:57.6px;width:1300px;height:1.3px;background:linear-gradient(90deg,rgba(218,220,224,0) 0,#dcdee1 40px,#dcdee1 100%);"></div>
<div class="a" style="left:335px;top:16.5px;width:27px;height:27px;background:#1a73e8;border-radius:50%;"></div>
<div class="t" style="top:22.93px;font-size:14.5px;line-height:14.5px;color:#fff;-webkit-text-stroke:0.4px #fff;left:348.5px;transform:translateX(-50%);">A</div>
<svg class="a" style="left:369px;top:15.8px" width="28" height="28" viewBox="0 0 28 28"><circle cx="14" cy="14" r="13" fill="none" stroke="#9aa0a6" stroke-width="1.2" stroke-dasharray="2.2 2.2"/><path d="M14 8 V20 M8 14 H20" stroke="#5f6368" stroke-width="1.7"/></svg>
<div class="a" style="left:420px;top:16.5px;width:1px;height:22.5px;background:#dadce0;"></div>
<div class="t" style="top:17.95px;font-size:20.5px;line-height:20.5px;color:#1f1f1f;left:440.2px;">Pages and screens: Page path and screen class</div>
<div class="a" style="left:440px;top:40.5px;width:440px;height:2px;background-image:linear-gradient(90deg,#5f6368 0 3.2px,transparent 3.2px 5.8px);background-size:5.8px 2px;"></div>
<div class="a" style="left:885.5px;top:16.3px;width:56.5px;height:26.7px;box-sizing:border-box;border:1px solid #dadce0;border-radius:14px;"></div>
<svg class="a" style="left:892px;top:21px" width="18" height="18" viewBox="0 0 18 18"><circle cx="8.8" cy="8.9" r="7" fill="none" stroke="#137333" stroke-width="1.7"/><path d="M5.3 9.2 L7.8 11.6 L12.3 6.8" fill="none" stroke="#137333" stroke-width="1.7"/></svg>
<svg class="a" style="left:921px;top:27px" width="9" height="5" viewBox="0 0 9 5"><path d="M0.5 0.3 L8.5 0.3 L4.5 4.7 Z" fill="#3c4043"/></svg>
<svg class="a" style="left:945.3px;top:15.8px" width="28" height="28" viewBox="0 0 28 28"><circle cx="14" cy="14" r="13" fill="none" stroke="#9aa0a6" stroke-width="1.2" stroke-dasharray="2.2 2.2"/><path d="M14 8 V20 M8 14 H20" stroke="#5f6368" stroke-width="1.7"/></svg>
<div class="a" style="left:1136px;top:21.8px;width:75.5px;height:14px;background:#eef0f1;border-radius:2px;"></div>
<div class="t" style="top:23.83px;font-size:10.6px;line-height:10.6px;color:#3c4043;-webkit-text-stroke:0.35px #3c4043;letter-spacing:0.55px;left:1173.7px;transform:translateX(-50%);">Last 28 days</div>
<div class="t" style="top:21.81px;font-size:13.45px;line-height:13.45px;color:#3c4043;left:1218px;">Mar 17 - Apr 13, 2026</div>
<svg class="a" style="left:1361px;top:26.5px" width="9" height="5" viewBox="0 0 9 5"><path d="M0.5 0.3 L8.5 0.3 L4.5 4.7 Z" fill="#444746"/></svg>
<div class="a" style="left:1382px;top:16.5px;width:1px;height:22.5px;background:#dadce0;"></div>
<svg class="a" style="left:1397px;top:19px" width="19" height="19" viewBox="0 0 19 19"><path d="M2.2 1.5 H16.2 Q17 1.5 17 2.3 V12.3 L12.3 17 H2.2 Q1.5 17 1.5 16.2 V2.3 Q1.5 1.5 2.2 1.5 Z" fill="none" stroke="#444746" stroke-width="1.8"/><path d="M12 17 V12.2 H17 Z" fill="#444746"/></svg>
<svg class="a" style="left:1434px;top:18px" width="21" height="20" viewBox="0 0 21 20"><rect x="1.5" y="2.5" width="4.6" height="14.8" rx="1" fill="#444746"/><rect x="9.2" y="0" width="1.7" height="19.5" fill="#444746"/><rect x="14.2" y="3.3" width="4.8" height="13.5" rx="1" fill="none" stroke="#444746" stroke-width="1.6"/></svg>
<svg class="a" style="left:1472px;top:18px" width="22" height="21" viewBox="0 0 22 21"><path d="M18.8 14.1 A8.6 8.6 0 1 0 15.9 17.5" fill="none" stroke="#444746" stroke-width="1.9"/><path d="M5.8 12.6 L8.6 9.9 L11.2 12.3 L15 8.4" fill="none" stroke="#444746" stroke-width="1.7"/><path d="M12.4 7.7 H15.6 V10.9" fill="none" stroke="#444746" stroke-width="1.6"/><rect x="16.8" y="16.2" width="3.2" height="3.2" fill="#444746"/></svg>
<svg class="a" style="left:1511px;top:18px" width="20" height="20" viewBox="0 0 20 20"><circle cx="15.3" cy="3.7" r="2.3" fill="none" stroke="#444746" stroke-width="1.7"/><circle cx="4" cy="10" r="2.3" fill="none" stroke="#444746" stroke-width="1.7"/><circle cx="15.3" cy="16.3" r="2.3" fill="none" stroke="#444746" stroke-width="1.7"/><path d="M6 8.9 L13.3 4.8 M6 11.1 L13.3 15.2" stroke="#444746" stroke-width="1.7"/></svg>
<svg class="a" style="left:1547px;top:19px" width="23" height="18" viewBox="0 0 23 18"><path d="M2.3 15 L7.6 9.2 L11.4 12.4 L19.8 5" fill="none" stroke="#444746" stroke-width="1.7"/><circle cx="2.3" cy="15" r="1.6" fill="#444746"/><circle cx="7.6" cy="9.2" r="1.5" fill="#444746"/><circle cx="11.4" cy="12.4" r="1.5" fill="#444746"/><circle cx="19.8" cy="5" r="1.7" fill="#444746"/><path d="M14 0.6 V4.6 M12 2.6 H16" stroke="#444746" stroke-width="1.1"/><path d="M3.2 4 V6.2 M2.1 5.1 H4.3" stroke="#444746" stroke-width="0.9"/></svg>
<svg class="a" style="left:0;top:0;z-index:10" width="1600" height="851" viewBox="0 0 1600 851"><path d="M63 6.5 Q74 30 52.5 53" fill="none" stroke="#b57cf8" stroke-width="5" stroke-linecap="butt"/><path d="M46.4 41.7 L61.1 64.6 L34 66.4 Z" fill="#b57cf8"/><path d="M39.5 127.5 Q22 142 25.5 158 Q28 172 38 180" fill="none" stroke="#b57cf8" stroke-width="5"/><path d="M46.9 169 L54.3 192 L29.6 188.8 Z" fill="#b57cf8"/><circle cx="67.5" cy="204" r="10" fill="none" stroke="#b57cf8" stroke-width="4.4"/><path d="M1072 139.5 Q1036 142 1031.5 180" fill="none" stroke="#b57cf8" stroke-width="5.5"/><path d="M1015 182 L1044 182 L1031 206 Z" fill="#b57cf8"/></svg>
</body></html>
